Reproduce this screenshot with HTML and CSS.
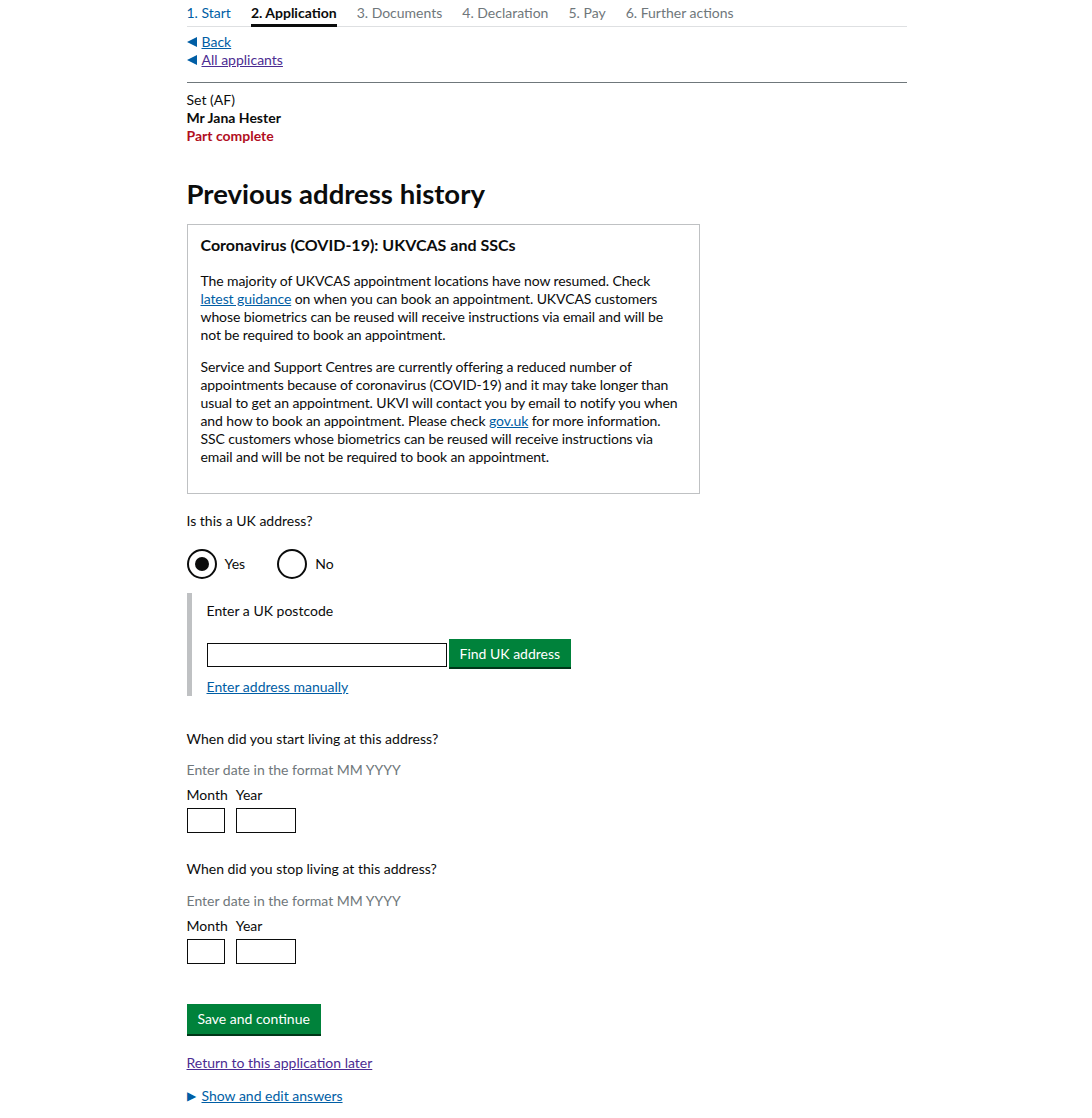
FILE: index.html
```html
<!DOCTYPE html>
<html lang="en">

<head>
  <meta charset="UTF-8">
  <meta name="viewport" content="width=device-width, initial-scale=1.0">
  <title>Previous address history</title>
  <link rel="stylesheet" href="styles.css">
</head>

<body>
  <div class="page">
    <ul class="steps">
      <li class="step done">1. Start</li>
      <li class="step current">2. Application</li>
      <li class="step">3. Documents</li>
      <li class="step">4. Declaration</li>
      <li class="step">5. Pay</li>
      <li class="step">6. Further actions</li>
    </ul>

    <div class="back-links">
      <a href="#" class="back">Back</a>
      <a href="#" class="back visited">All applicants</a>
    </div>

    <div class="applicant">
      <div>Set (AF)</div>
      <div class="name">Mr Jana Hester</div>
      <div class="status">Part complete</div>
    </div>

    <h1>Previous address history</h1>

    <div class="notice">
      <h2>Coronavirus (COVID-19): UKVCAS and SSCs</h2>
      <p>The majority of UKVCAS appointment locations have now resumed. Check <a href="#">latest guidance</a> on when you can book an appointment. UKVCAS customers whose biometrics can be reused will receive instructions via email and will be not be required to book an appointment.</p>
      <p>Service and Support Centres are currently offering a reduced number of appointments because of coronavirus (COVID-19) and it may take longer than usual to get an appointment. UKVI will contact you by email to notify you when and how to book an appointment. Please check <a href="#">gov.uk</a> for more information. SSC customers whose biometrics can be reused will receive instructions via email and will be not be required to book an appointment.</p>
    </div>

    <form action="#">
      <fieldset class="question">
        <legend>Is this a UK address?</legend>
        <div class="radios">
          <label class="radio"><span class="circle checked"></span>Yes</label>
          <label class="radio"><span class="circle"></span>No</label>
        </div>
      </fieldset>

      <div class="panel">
        <label for="postcode">Enter a UK postcode</label>
        <div class="postcode-row">
          <input type="text" id="postcode" class="postcode">
          <button type="button" class="button">Find UK address</button>
        </div>
        <a href="#">Enter address manually</a>
      </div>

      <fieldset class="date-group">
        <legend>When did you start living at this address?</legend>
        <div class="hint">Enter date in the format MM YYYY</div>
        <div class="date-fields">
          <div class="date-item">
            <label for="start-month">Month</label>
            <input type="text" id="start-month" class="month">
          </div>
          <div class="date-item">
            <label for="start-year">Year</label>
            <input type="text" id="start-year" class="year">
          </div>
        </div>
      </fieldset>

      <fieldset class="date-group">
        <legend>When did you stop living at this address?</legend>
        <div class="hint">Enter date in the format MM YYYY</div>
        <div class="date-fields">
          <div class="date-item">
            <label for="stop-month">Month</label>
            <input type="text" id="stop-month" class="month">
          </div>
          <div class="date-item">
            <label for="stop-year">Year</label>
            <input type="text" id="stop-year" class="year">
          </div>
        </div>
      </fieldset>

      <button type="submit" class="button save">Save and continue</button>
    </form>

    <p class="later"><a href="#" class="visited">Return to this application later</a></p>
    <p class="answers"><span class="arrow">&#9654;</span><a href="#">Show and edit answers</a></p>
  </div>
</body>

</html>
```

FILE: styles.css
```css
body {
  margin: 0;
  font-family: Lato, "Noto Sans", sans-serif;
  font-size: 14px;
  line-height: 18px;
  color: #0b0c0c;
  background: #fff;
}

.page {
  width: 720px;
  margin: 0 auto;
  padding-left: 1px;
}

a {
  color: #005ea5;
}

a.visited {
  color: #4c2c92;
}

/* progress steps */
.steps {
  display: flex;
  gap: 20px;
  list-style: none;
  margin: 0;
  padding: 4px 0 0;
  border-bottom: 1px solid #dee0e2;
}

.step {
  color: #6f777b;
  padding-bottom: 2px;
  border-bottom: 3px solid transparent;
  margin-bottom: -1px;
}

.step.done {
  color: #005ea5;
}

.step.current {
  color: #0b0c0c;
  font-weight: bold;
  border-bottom-color: #0b0c0c;
}

.back-links {
  display: flex;
  flex-direction: column;
  align-items: flex-start;
  padding: 6px 0 13px;
  border-bottom: 1px solid #6f777b;
}

.back::before {
  content: "";
  display: inline-block;
  border-style: solid;
  border-width: 5px 10px 5px 0;
  border-color: transparent #005ea5 transparent transparent;
  margin-right: 5px;
}

.applicant {
  padding-top: 8px;
}

.name {
  font-weight: bold;
}

.status {
  font-weight: bold;
  color: #b10e1e;
}

h1 {
  font-size: 27.5px;
  line-height: 32px;
  margin: 33px 0 14px;
}

.notice {
  width: 485px;
  border: 1px solid #bfc1c3;
  padding: 10px 13px 13px;
  letter-spacing: -0.1px;
}

.notice h2 {
  font-size: 16px;
  line-height: 20px;
  margin: 0 0 17px;
  letter-spacing: 0;
}

.notice p {
  margin: 0 0 14px;
}

form {
  margin: 0;
}

fieldset {
  border: 0;
  margin: 0;
  padding: 0;
}

legend {
  padding: 0;
}

.question {
  margin-top: 18px;
}

.radios {
  display: flex;
  gap: 32px;
  margin-top: 19px;
}

.radio {
  display: flex;
  align-items: center;
  gap: 8px;
}

.circle {
  width: 26px;
  height: 26px;
  border: 2px solid #0b0c0c;
  border-radius: 50%;
  position: relative;
}

.circle.checked::after {
  content: "";
  position: absolute;
  top: 6px;
  left: 6px;
  width: 14px;
  height: 14px;
  border-radius: 50%;
  background: #0b0c0c;
}

.panel {
  margin-top: 14px;
  border-left: 5px solid #bfc1c3;
  padding: 9px 0 0 15px;
  display: flex;
  flex-direction: column;
  align-items: flex-start;
}

.postcode-row {
  display: flex;
  align-items: flex-start;
  gap: 2px;
  margin: 19px 0 11px;
}

input {
  box-sizing: border-box;
  border: 1px solid #0b0c0c;
  font: inherit;
  margin: 0;
  padding: 2px 4px;
  border-radius: 0;
}

.postcode {
  width: 240px;
  height: 24px;
  margin-top: 4px;
}

.button {
  font-family: inherit;
  font-size: 14px;
  line-height: 18px;
  color: #fff;
  background: #00823b;
  border: 0;
  border-radius: 0;
  box-shadow: 0 2px 0 #003618;
  padding: 6px 11px 4px;
  cursor: pointer;
}

.date-group {
  margin-top: 27px;
}

.panel + .date-group {
  margin-top: 34px;
}

.hint {
  color: #6f777b;
  margin-top: 13px;
}

.date-group + .date-group .hint {
  margin-top: 14px;
}

.date-fields {
  display: flex;
  gap: 8px;
  margin-top: 7px;
}

.date-item {
  display: flex;
  flex-direction: column;
  gap: 4px;
}

.month {
  width: 38px;
  height: 25px;
}

.year {
  width: 60px;
  height: 25px;
}

.save {
  margin-top: 40px;
  padding: 6px 11px;
}

.later {
  margin: 20px 0 0;
}

.answers {
  margin: 15px 0 0;
  display: flex;
  gap: 6px;
}

.arrow {
  color: #005ea5;
  font-size: 12px;
}
```
